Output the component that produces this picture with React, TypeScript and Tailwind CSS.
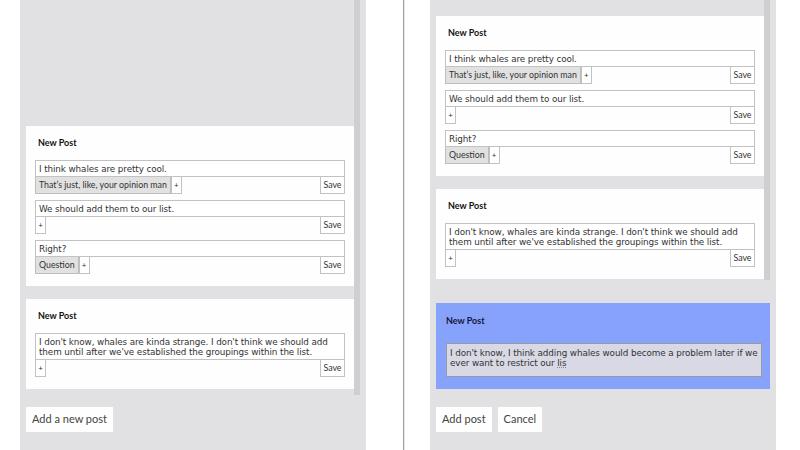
import React from "react";

const UI = { fontFamily: "Lato, 'Open Sans', sans-serif" };
const MONO = { fontFamily: "'DejaVu Sans', Verdana, sans-serif" };

type ItemProps = { text: string; tag?: string };

function PostItem({ text, tag }: ItemProps) {
  return (
    <div className="flex flex-col">
      <div
        className="border border-[#c2c2c2] bg-white px-[3px] pb-[2px] pt-[3px] text-[8.8px] leading-[10px] tracking-[-0.1px] text-[#333]"
        style={MONO}
      >
        {text}
      </div>
      <div className="flex h-[17px] text-[8.8px] leading-[16px] text-[#333]" style={UI}>
        {tag && (
          <div className="border border-t-0 border-[#bdbdbd] bg-[#e1e1e1] px-[3px]">{tag}</div>
        )}
        <div className="flex w-[11px] items-center justify-center border border-t-0 border-[#c2c2c2] bg-white text-[8px]">
          +
        </div>
        <div className="flex-1" />
        <div className="w-[25px] border border-t-0 border-[#c2c2c2] bg-white text-center">Save</div>
      </div>
    </div>
  );
}

function Card({ items }: { items: ItemProps[] }) {
  return (
    <div className="flex flex-col bg-[#fefefe] px-[9px] pb-[12px] pt-[12px]">
      <div className="mb-[12px] pl-[3px] text-[9px] font-bold leading-[10px] text-[#111]" style={UI}>
        New Post
      </div>
      <div className="flex flex-col gap-[6px]">
        {items.map((it, i) => (
          <PostItem key={i} {...it} />
        ))}
      </div>
    </div>
  );
}

const card1: ItemProps[] = [
  { text: "I think whales are pretty cool.", tag: "That\u2019s just, like, your opinion man" },
  { text: "We should add them to our list." },
  { text: "Right?", tag: "Question" },
];
const card2: ItemProps[] = [
  {
    text: "I don't know, whales are kinda strange. I don't think we should add them until after we've established the groupings within the list.",
  },
];

function Btn({ children }: { children: React.ReactNode }) {
  return (
    <div
      className="flex h-[25px] items-center bg-[#fefefe] px-[6px] text-[11px] text-[#444]"
      style={UI}
    >
      {children}
    </div>
  );
}

export default function App() {
  return (
    <div className="flex h-[450px] w-[800px] overflow-hidden bg-white">
      <div className="w-[20px]" />
      {/* Left panel */}
      <div className="flex w-[346px] flex-col bg-[#e1e0e2] px-[6px]">
        <div className="flex h-[395px]">
          <div className="flex flex-1 flex-col justify-end gap-[13px] pb-[6px]">
            <Card items={card1} />
            <Card items={card2} />
          </div>
          <div className="w-[6px] bg-[#cfced0]" />
        </div>
        <div className="mt-[12px] flex">
          <Btn>Add a new post</Btn>
        </div>
      </div>
      <div className="w-[37px]" />
      <div className="w-[1px] bg-[#a3a3a3]" />
      <div className="w-[1px] bg-[#e6e6e6]" />
      <div className="w-[25px]" />
      {/* Right panel */}
      <div className="flex w-[346px] flex-col bg-[#e1e0e2] px-[6px]">
        <div className="flex h-[280px]">
          <div className="flex flex-1 flex-col justify-end gap-[13px] pb-[1px]">
            <Card items={card1} />
            <Card items={card2} />
          </div>
          <div className="w-[6px] bg-[#cfced0]" />
        </div>
        <div className="mt-[23px] flex flex-col bg-[#87a2fb] pb-[12px] pl-[10px] pr-[8px] pt-[13px]">
          <div className="mb-[17px] text-[9px] font-bold leading-[10px] text-[#14163a]" style={UI}>
            New Post
          </div>
          <div
            className="h-[34px] border border-[#9a9aa2] bg-[#d8d9e5] px-[3px] pt-[4px] text-[8.8px] leading-[10px] tracking-[-0.1px] text-[#333]"
            style={MONO}
          >
            I don't know, I think adding whales would become a problem later if we ever want to
            restrict our{" "}
            <span className="inline-block leading-[10px] underline decoration-dotted decoration-[#888]">
              lis
            </span>
          </div>
        </div>
        <div className="mt-[18px] flex gap-[6px]">
          <Btn>Add post</Btn>
          <Btn>Cancel</Btn>
        </div>
      </div>
    </div>
  );
}
